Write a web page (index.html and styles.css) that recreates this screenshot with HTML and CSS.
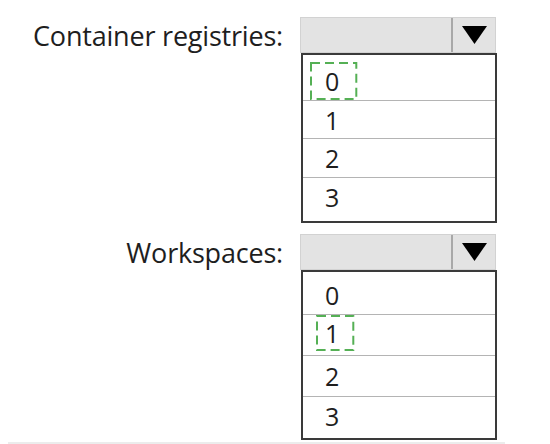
FILE: index.html
```html
<!DOCTYPE html>
<html>
<head>
<meta charset="utf-8">
<link rel="stylesheet" href="styles.css">
</head>
<body>
<div class="page">
  <div class="field field-a">
    <div class="label">Container registries:</div>
    <div class="control">
      <div class="select">
        <div class="value"></div>
        <div class="btn"><svg width="25" height="18" viewBox="0 0 25 18"><polygon points="0,0 25,0 12.5,18" fill="#000"/></svg></div>
      </div>
      <ul class="list list-a">
        <li><span class="pick pick-a"><svg class="dash"><rect/></svg>0</span></li>
        <li>1</li>
        <li>2</li>
        <li>3</li>
      </ul>
    </div>
  </div>
  <div class="field field-b">
    <div class="label">Workspaces:</div>
    <div class="control">
      <div class="select">
        <div class="value"></div>
        <div class="btn"><svg width="25" height="18" viewBox="0 0 25 18"><polygon points="0,0 25,0 12.5,18" fill="#000"/></svg></div>
      </div>
      <ul class="list list-b">
        <li>0</li>
        <li><span class="pick pick-b"><svg class="dash"><rect/></svg>1</span></li>
        <li>2</li>
        <li>3</li>
      </ul>
    </div>
  </div>
  <div class="rule"></div>
</div>
</body>
</html>
```

FILE: styles.css
```css
html, body {
  margin: 0;
  padding: 0;
  background: #fff;
}
body {
  font-family: "Open Sans", "Noto Sans", sans-serif;
  color: #1e1e1e;
  width: 550px;
  height: 444px;
  overflow: hidden;
}
.page {
  padding-top: 17px;
  display: flex;
  flex-direction: column;
}
.field {
  display: grid;
  grid-template-columns: 300px 197px;
}
.field-b {
  margin-top: 11px;
}
.label {
  height: 36px;
  display: flex;
  align-items: center;
  justify-content: flex-end;
  padding-right: 17px;
  font-size: 27px;
  letter-spacing: -0.2px;
  white-space: nowrap;
}
.control {
  display: flex;
  flex-direction: column;
}
.select {
  height: 36px;
  box-sizing: border-box;
  display: flex;
  background: #e3e3e3;
  border: 1px solid #d2d2d2;
  width: 196px;
}
.value {
  flex: 1;
}
.btn {
  width: 42px;
  border-left: 2px solid #a8a8a8;
  display: flex;
  align-items: center;
  justify-content: center;
}
.list {
  list-style: none;
  margin: 0;
  margin-left: 1px;
  padding: 0;
  width: 196px;
  box-sizing: border-box;
  border: 2px solid #3a3a3a;
  font-size: 25px;
}
.list li {
  box-sizing: border-box;
  padding-left: 22px;
  display: flex;
  align-items: center;
  border-top: 1px solid #b4b4b4;
}
.list li:first-child {
  border-top: none;
}
.list-a li:nth-child(1) { height: 45px; align-items: flex-end; }
.list-a li:nth-child(2) { height: 38px; }
.list-a li:nth-child(3) { height: 39px; }
.list-a li:nth-child(4) { height: 44px; padding-bottom: 6px; }
.list-b li:nth-child(1) { height: 42px; padding-top: 4px; }
.list-b li:nth-child(2) { height: 41px; align-items: flex-start; }
.list-b li:nth-child(3) { height: 41px; }
.list-b li:nth-child(4) { height: 42px; padding-bottom: 4px; }
.pick {
  position: relative;
  display: inline-flex;
  align-items: center;
  box-sizing: border-box;
}
.pick-a {
  height: 38px;
  margin-left: -15px;
  padding-left: 15px;
  padding-right: 18px;
}
.pick-b {
  height: 36px;
  margin-left: -9px;
  padding-left: 9px;
  padding-right: 15px;
}
.dash {
  position: absolute;
  left: 0;
  top: 0;
  width: 100%;
  height: 100%;
  overflow: visible;
}
.dash rect {
  x: 1px;
  y: 1px;
  width: calc(100% - 2px);
  height: calc(100% - 2px);
  fill: none;
  stroke: #55b055;
  stroke-width: 2;
  stroke-dasharray: 9 5;
}
.rule {
  margin-top: 2px;
  margin-left: 8px;
  width: 497px;
  height: 2px;
  background: #ececec;
}
```
